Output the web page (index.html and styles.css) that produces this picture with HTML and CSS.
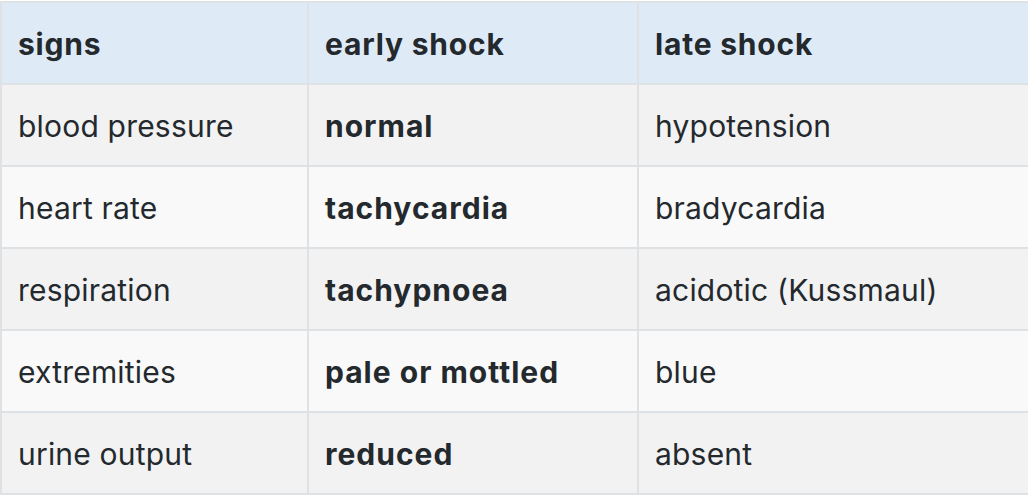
FILE: index.html
```html
<!DOCTYPE html>
<html>
<head>
<meta charset="utf-8">
<link rel="stylesheet" href="styles.css">
</head>
<body>
<table class="shock">
  <colgroup>
    <col class="c1">
    <col class="c2">
    <col class="c3">
  </colgroup>
  <thead>
    <tr><th>signs</th><th>early shock</th><th>late shock</th></tr>
  </thead>
  <tbody>
    <tr><td>blood pressure</td><td><strong>normal</strong></td><td>hypotension</td></tr>
    <tr><td>heart rate</td><td><strong>tachycardia</strong></td><td>bradycardia</td></tr>
    <tr><td>respiration</td><td><strong>tachypnoea</strong></td><td>acidotic (Kussmaul)</td></tr>
    <tr><td>extremities</td><td><strong>pale or mottled</strong></td><td>blue</td></tr>
    <tr><td>urine output</td><td><strong>reduced</strong></td><td>absent</td></tr>
  </tbody>
</table>
</body>
</html>
```
FILE: styles.css
```css
html, body {
  margin: 0;
  padding: 0;
  background: #ffffff;
  overflow: hidden;
}
body {
  padding-top: 1px;
  font-family: Inter, "Noto Sans", sans-serif;
  color: #24292e;
}
.shock {
  border-collapse: separate;
  border-spacing: 0;
  table-layout: fixed;
  width: 1050px;
  border-top: 2px solid #dfe2e5;
  border-left: 2px solid #dfe2e5;
  font-size: 30px;
  letter-spacing: 0.2px;
}
.c1 { width: 307px; }
.c2 { width: 330px; }
.c3 { width: 411px; }
.shock th,
.shock td {
  box-sizing: border-box;
  height: 82px;
  padding: 2px 16px 0;
  border-right: 2px solid #dfe2e5;
  border-bottom: 2px solid #dfe2e5;
  text-align: left;
  vertical-align: middle;
  white-space: nowrap;
}
.shock th {
  font-weight: 700;
  letter-spacing: 0.8px;
  background: #deebf7;
}
.shock strong {
  font-weight: 700;
  letter-spacing: 1px;
}
.shock tbody tr:nth-child(odd) td { background: #f2f2f2; }
.shock tbody tr:nth-child(even) td { background: #f9f9f9; }
```
